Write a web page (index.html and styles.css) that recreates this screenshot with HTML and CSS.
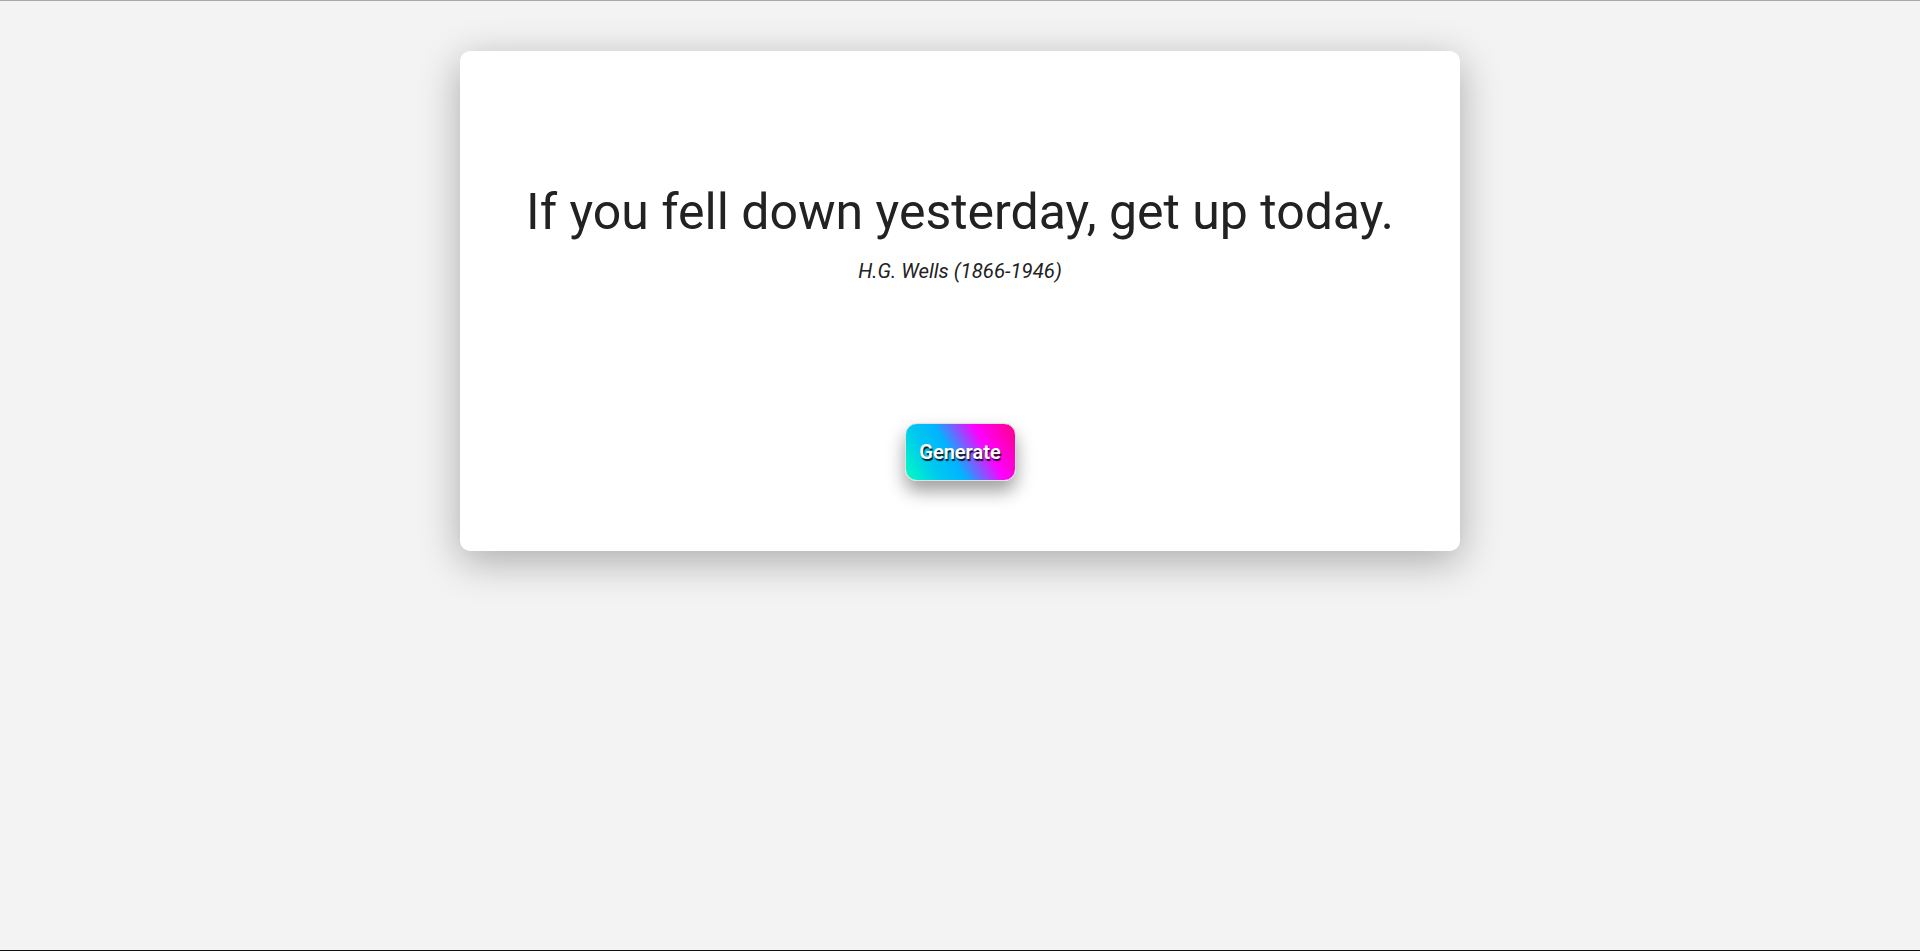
FILE: index.html
```html
<!DOCTYPE html>
<html lang="en">
<head>
<meta charset="utf-8">
<title>Random Quote Generator</title>
<link rel="stylesheet" href="styles.css">
</head>
<body>
  <main class="page">
    <section class="card">
      <h1 class="quote">If you fell down yesterday, get up today.</h1>
      <p class="author">H.G. Wells (1866-1946)</p>
      <button class="generate" type="button">Generate</button>
    </section>
  </main>
</body>
</html>
```
FILE: styles.css
```css
html, body {
  margin: 0;
  padding: 0;
  height: 100%;
}

body {
  background: #f3f3f3;
  font-family: Roboto, "Liberation Sans", sans-serif;
  border-top: 1px solid #a9a9a9;
  border-bottom: 1px solid #111;
  box-sizing: border-box;
}

.page {
  display: flex;
  justify-content: center;
  padding-top: 50px;
}

.card {
  width: 1000px;
  height: 500px;
  box-sizing: border-box;
  background: #fff;
  border-radius: 10px;
  box-shadow: 0 10px 40px rgba(0, 0, 0, 0.3);
  display: flex;
  flex-direction: column;
  align-items: center;
  padding: 132px 40px 70px;
}

.quote {
  margin: 0;
  font-size: 50px;
  font-weight: 400;
  line-height: 1.172;
  color: #222;
  text-align: center;
}

.author {
  margin: 17px 0 0;
  font-size: 20.4px;
  font-style: italic;
  color: #222;
}

.generate {
  margin-top: auto;
  width: 111px;
  height: 58px;
  border: 1px solid #e0e0e0;
  border-radius: 12px;
  background: linear-gradient(60deg, #00ffc0 0%, #00c8f0 25%, #00b4ff 42%, #ff00ff 70%, #ff0088 100%);
  color: #fff;
  font-family: Roboto, "Liberation Sans", sans-serif;
  font-size: 20px;
  font-weight: 600;
  text-shadow: 1px 2px 1px rgba(0, 0, 0, 0.85);
  box-shadow: 0 10px 18px rgba(0, 0, 0, 0.38);
  cursor: pointer;
  padding: 0;
}
```
